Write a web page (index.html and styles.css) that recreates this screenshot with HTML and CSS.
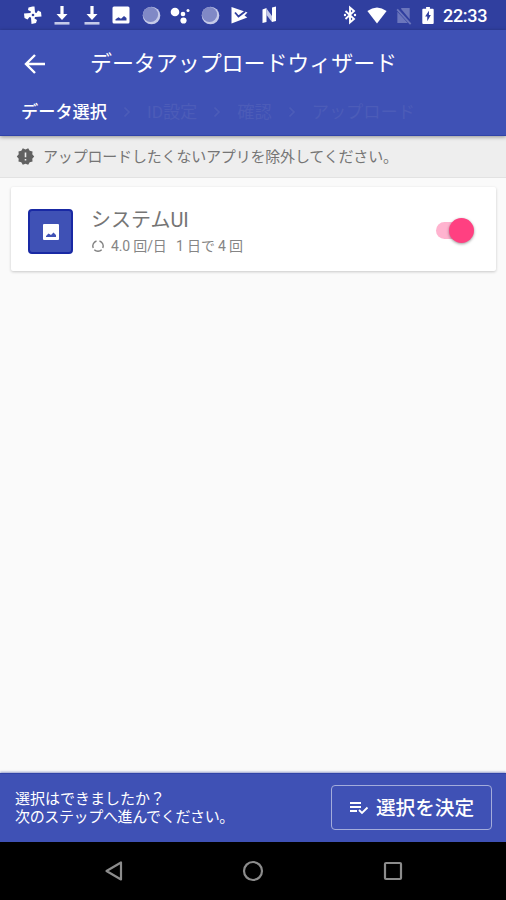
FILE: index.html
```html
<!DOCTYPE html>
<html lang="ja">
<head>
<meta charset="utf-8">
<meta name="viewport" content="width=device-width">
<title>データアップロードウィザード</title>
<link rel="stylesheet" href="styles.css">
</head>
<body>
<div class="screen">
  <div class="status">
    <div class="notifications">
      <svg viewBox="0 0 20 20"><path d="M9.500 1.500L5.500 2.500 5 5l3 1.500L7.500 8 1 8.500 1.500 13l3 1.500L6.500 12l1.500.5.5 6.500 4.500-1 1-3-2.500-1.500L12 12l6.500-.5L18 7l-3-1.500L13.500 8 12 7.500 11.500 1.500Z"/><circle class="hub" cx="10" cy="10" r="1.300"/></svg>
      <svg viewBox="0 0 20 20"><path d="M8.400 1h3.200v8h3.900L10 15 4.500 9h3.900Z"/><path class="soft" d="M2.500 17h15v2.600h-15Z"/></svg>
      <svg viewBox="0 0 20 20"><path d="M8.400 1h3.200v8h3.900L10 15 4.500 9h3.900Z"/><path class="soft" d="M2.500 17h15v2.600h-15Z"/></svg>
      <svg viewBox="0 0 20 20"><path fill-rule="evenodd" d="M3 1.500h14a1.500 1.500 0 0 1 1.500 1.500v14a1.500 1.500 0 0 1-1.500 1.500H3A1.500 1.500 0 0 1 1.500 17V3A1.500 1.500 0 0 1 3 1.500ZM4.500 15.500h11V13L13 11l-3 2.700-2.500-1.400-3 2Z"/></svg>
      <svg viewBox="0 0 20 20"><circle class="soft" cx="10.500" cy="10.500" r="8.800"/><circle class="disc" cx="9.500" cy="9.500" r="7.600"/></svg>
      <svg viewBox="0 0 20 20"><circle cx="5" cy="7" r="4.300"/><circle cx="13" cy="9" r="2.300"/><circle cx="13.500" cy="15.500" r="3.100"/><circle cx="18" cy="5.500" r="1.500"/></svg>
      <svg viewBox="0 0 20 20"><circle class="soft" cx="10.500" cy="10.500" r="8.800"/><circle class="disc" cx="9.500" cy="9.500" r="7.600"/></svg>
      <svg viewBox="0 0 20 20"><path d="M2.500 2l16 5.500-3 3 2.800 2L2.500 18.500Z"/><path class="cut" d="M6 7.500l3.500 4 6.500-5"/></svg>
      <svg viewBox="0 0 20 20"><path d="M3.500 4.500L7.500 3v14l-4 1ZM13 2.500l4-1v14.500l-4 1Z"/><path class="soft" d="M7.500 3.500L13 11v6L7.500 10Z"/></svg>
    </div>
    <div class="system">
      <svg class="bluetooth" viewBox="0 0 14 20"><path class="line" d="M2.500 6l8.500 8L7 17.500v-15L11 6l-8.500 8"/><circle cx="2" cy="10" r="1.200"/><circle cx="12" cy="10" r="1.200"/></svg>
      <svg class="wifi" viewBox="0 0 22 20"><path d="M11 19.500L.3 5.500Q11-2.300 21.700 5.500Z"/></svg>
      <svg class="sim" viewBox="0 0 16 20"><path d="M5.500 2H14v12L4.800 3ZM1 6l11 12H1Z"/><path class="line" d="M.8 3.500L15 19"/></svg>
      <svg class="battery" viewBox="0 0 12 20"><path fill-rule="evenodd" d="M4 1h4v2h3a1 1 0 0 1 1 1v14a1 1 0 0 1-1 1H1a1 1 0 0 1-1-1V4a1 1 0 0 1 1-1h3ZM7 5L3 11h2.200v5L9 9.500H7Z"/></svg>
      <span class="clock">22:33</span>
    </div>
  </div>
  <header class="appbar">
    <div class="titlebar">
      <svg class="back" viewBox="0 0 24 24"><path d="M22 12H4M12 3L3 12l9 9"/></svg>
      <h1>データアップロードウィザード</h1>
    </div>
    <ol class="steps">
      <li class="current">データ選択</li>
      <li><svg class="chevron" viewBox="0 0 8 12"><path d="M1.500 1.500L6 6l-4.500 4.500"/></svg><span class="id-step">ID設定</span></li>
      <li><svg class="chevron" viewBox="0 0 8 12"><path d="M1.500 1.500L6 6l-4.500 4.500"/></svg>確認</li>
      <li><svg class="chevron" viewBox="0 0 8 12"><path d="M1.500 1.500L6 6l-4.500 4.500"/></svg>アップロード</li>
    </ol>
  </header>
  <div class="notice">
    <svg viewBox="0 0 24 24"><path fill-rule="evenodd" d="M23 12l-2.440-2.780.340-3.680-3.610-.820L15.400 1.540 12 3 8.600 1.540 6.710 4.720l-3.610.810.340 3.680L1 12l2.440 2.780-.340 3.690 3.610.820 1.890 3.180L12 21l3.400 1.460 1.890-3.180 3.610-.820-.340-3.680ZM13 17h-2v-2h2Zm0-4h-2V7h2Z"/></svg>
    <p>アップロードしたくないアプリを除外してください。</p>
  </div>
  <main>
    <section class="card">
      <div class="app-icon"><svg viewBox="0 0 16 16"><path fill-rule="evenodd" d="M1 0h14a1 1 0 0 1 1 1v14a1 1 0 0 1-1 1H1a1 1 0 0 1-1-1V1a1 1 0 0 1 1-1ZM3 13h10v-2l-2.500-2.500L8 11 5.500 9.500 3 12Z"/></svg></div>
      <div class="info">
        <h2>システムUI</h2>
        <p><svg viewBox="0 0 14 14"><path d="M8.500 2A5.200 5.200 0 0 1 11.800 9M10.700 10.700A5.200 5.200 0 0 1 3.300 10.700M2.200 9A5.200 5.200 0 0 1 5.500 2"/></svg><span class="rate">4.0 回/日</span><span class="total">1 日で 4 回</span></p>
      </div>
      <div class="switch"><div class="thumb"></div></div>
    </section>
  </main>
  <footer>
    <p>選択はできましたか？<br><span class="next-step">次のステップへ進んでください。</span></p>
    <button><svg viewBox="0 0 20 14"><path d="M1 2h11M1 6h11M1 10h7M10 9l3 3 5.500-5.500"/></svg><span>選択を決定</span></button>
  </footer>
  <nav>
    <svg viewBox="0 0 22 22"><path d="M18 2.500v17L3.500 11Z"/></svg>
    <svg viewBox="0 0 22 22"><circle cx="11" cy="11" r="9"/></svg>
    <svg viewBox="0 0 22 22"><rect x="3" y="3" width="16" height="16" rx="1"/></svg>
  </nav>
</div>
</body>
</html>
```
FILE: styles.css
```css
* { box-sizing: border-box; }
body { margin: 0; font-family: Roboto, "Noto Sans CJK JP", sans-serif; }
h1, h2, p, ol { margin: 0; padding: 0; font-weight: 400; }
svg { display: block; flex: none; }
.screen { width: 506px; height: 900px; display: flex; flex-direction: column; background: #fafafa; overflow: hidden; }

.status { height: 30px; flex: none; background: #303f9f; display: flex; justify-content: space-between; align-items: center; padding: 0 18px 0 18px; color: #fff; fill: #fff; }
.notifications { display: grid; grid-template-columns: repeat(9, 29.5px); justify-items: center; }
.notifications svg { width: 20px; height: 20px; }
.soft { fill: #c5cae9; }
.disc { fill: #8089c6; }
.hub { fill: #303f9f; }
.cut { fill: none; stroke: #303f9f; stroke-width: 1.8; }
.system { display: flex; align-items: center; }
.bluetooth { width: 14px; height: 20px; margin-right: 9px; }
.wifi { width: 22px; height: 18px; margin-right: 8px; }
.sim { width: 16px; height: 19px; margin-right: 10px; fill: #6b76bc; }
.sim .line { stroke: #6b76bc; }
.battery { width: 12px; height: 19px; margin-right: 9px; }
.line { fill: none; stroke: #fff; stroke-width: 1.9; }
.clock { font-size: 18px; line-height: 30px; font-weight: 500; width: 45px; letter-spacing: -.3px; padding-top: 2px; }

.appbar { height: 106px; flex: none; background: #3f51b5; border-bottom: 1px solid #3043a8; position: relative; box-shadow: 0 1px 4px rgba(0,0,0,.4); color: #fff; }
.titlebar { height: 67px; display: flex; align-items: center; padding-left: 23px; }
.back { width: 24px; height: 24px; fill: none; stroke: #fff; stroke-width: 2.4; margin: 1px 43px 0 0; }
h1 { font-size: 22px; line-height: 32px; letter-spacing: -.07px; padding-top: 1px; }
.steps { display: flex; align-items: center; list-style: none; padding-left: 21px; font-size: 17.2px; line-height: 30px; color: #4c5cb8; }
.steps li { display: flex; align-items: center; white-space: nowrap; }
.current { color: #fff; font-weight: 500; }
.chevron { width: 8px; height: 12px; margin: 0 16px; fill: none; stroke: #4c5cb8; stroke-width: 1.7; }

.notice { height: 42px; flex: none; background: #eee; border-bottom: 1px solid #e2e2e2; display: flex; align-items: center; padding: 0 0 1px 16px; color: #757575; }
.notice svg { width: 19px; height: 19px; fill: #616161; margin-right: 8px; }
.notice p { font-size: 15px; line-height: 24px; letter-spacing: -.18px; padding-top: 2px; }

main { flex: 1; padding: 9px 10px 0 11px; }
.card { height: 84px; background: #fff; border-radius: 2px; box-shadow: 0 1px 3px rgba(0,0,0,.2); display: flex; align-items: center; padding: 4px 22px 0 17px; }
.app-icon { width: 45px; height: 45px; border: 2px solid #1929a4; border-radius: 4px; background: #3f51b5; display: grid; place-items: center; fill: #fff; margin-top: 1px; }
.app-icon svg { width: 16px; height: 16px; }
.info { margin-left: 18px; flex: 1; color: #757575; }
h2 { font-size: 20px; line-height: 29px; margin-top: 1px; }
.info p { display: flex; align-items: center; font-size: 14px; line-height: 24px; margin-top: -1px; letter-spacing: -.15px; white-space: nowrap; color: #858585; }
.info svg { width: 14px; height: 14px; fill: none; stroke: #808080; stroke-width: 1.4; margin-right: 6px; }
.rate { width: 65px; }
.switch { width: 38px; height: 17px; border-radius: 9px; background: linear-gradient(90deg, #ffb3cf 70%, transparent 70%); display: flex; align-items: center; justify-content: flex-end; margin-top: -2px; }
.thumb { width: 25px; height: 25px; border-radius: 50%; background: #ff4081; box-shadow: 0 1px 3px rgba(0,0,0,.4); flex: none; }

footer { height: 69px; flex: none; background: #3f51b5; border-top: 1px solid #3043a8; box-shadow: 0 -1px 2px rgba(48,63,159,.5); display: flex; justify-content: space-between; align-items: center; padding: 0 14px 2px 15px; color: #fff; }
footer p { font-size: 15px; line-height: 18px; white-space: nowrap; padding-top: 2px; }
.next-step { letter-spacing: -.35px; }
button { width: 161px; height: 45px; border: 1.500px solid #a3acdb; border-radius: 4px; background: none; color: #fff; padding: 2px 0 0; display: flex; align-items: center; justify-content: center; font: 500 19.600px/28px Roboto, "Noto Sans CJK JP", sans-serif; white-space: nowrap; }
button span { padding-top: 1px; }
button svg { width: 20px; height: 14px; fill: none; stroke: #fff; stroke-width: 1.8; margin-right: 7px; }

nav { height: 58px; flex: none; background: #000; display: grid; grid-template-columns: repeat(3, 139.500px); justify-content: center; justify-items: center; align-items: center; }
nav svg { width: 22px; height: 22px; fill: none; stroke: #8c8c8c; stroke-width: 2.2; stroke-linejoin: round; }
```
